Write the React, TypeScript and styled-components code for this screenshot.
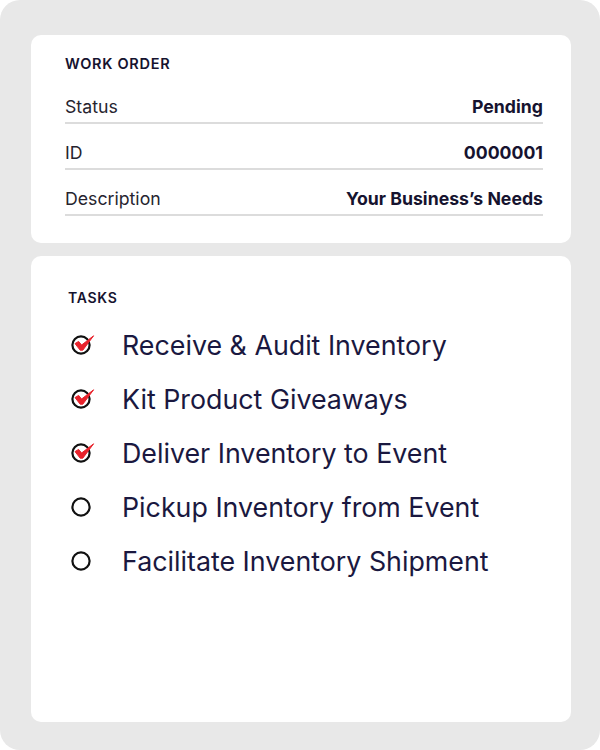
import React from 'react';
import styled, { createGlobalStyle } from 'styled-components';

const GlobalStyle = createGlobalStyle`
  html, body {
    margin: 0;
    padding: 0;
    background: #ffffff;
  }
  body {
    font-family: Inter, "Noto Sans", sans-serif;
    color: #16132f;
  }
`;

const Frame = styled.div`
  width: 600px;
  height: 750px;
  box-sizing: border-box;
  background: #e8e8e8;
  border-radius: 20px;
  padding: 35px 29px 28px 31px;
  display: flex;
  flex-direction: column;
  gap: 13px;
`;

const Card = styled.section<{ $grow?: boolean }>`
  background: #ffffff;
  border-radius: 10px;
  box-sizing: border-box;
  flex: ${p => (p.$grow ? '1' : 'none')};
`;

const OrderCard = styled(Card)`
  height: 208px;
  padding: 20px 28px 0 34px;
`;

const TasksCard = styled(Card)`
  padding: 33px 28px 0 37px;
`;

const Heading = styled.h2<{ $size?: number }>`
  margin: 0;
  font-size: ${p => p.$size ?? 14.5}px;
  font-weight: 600;
  letter-spacing: 0.7px;
  line-height: 17px;
  color: #16132f;
`;

const Rows = styled.div`
  margin-top: 6px;
  display: flex;
  flex-direction: column;
`;

const Row = styled.div`
  display: flex;
  justify-content: space-between;
  align-items: flex-end;
  height: 46px;
  padding-bottom: 4px;
  box-sizing: border-box;
  border-bottom: 2px solid #dcdcdc;
  font-size: 17.7px;
  line-height: 22px;
`;

const Label = styled.span`
  color: #26242f;
`;

const Value = styled.span`
  font-weight: 700;
  color: #16132f;
`;

const TaskList = styled.ul`
  list-style: none;
  margin: 12px 0 0;
  padding: 0;
  display: flex;
  flex-direction: column;
`;

const Task = styled.li`
  display: flex;
  align-items: center;
  height: 54px;
  gap: 29px;
  font-size: 26.8px;
  color: #1a1840;
`;

const IconBox = styled.span`
  width: 24px;
  height: 24px;
  flex: none;
  display: flex;
  margin-left: 1px;

  svg {
    overflow: visible;
  }
`;

const CheckIcon = ({ done }: { done: boolean }) => (
  <IconBox>
    <svg width="24" height="24" viewBox="0 0 24 24">
      <circle cx="12" cy="12" r="8.6" fill="none" stroke="#111" strokeWidth="2.2" />
      {done && (
        <path
          d="M6 10.6 L9.6 8.4 L12.6 12 L24.6 2.8 L13.8 17.2 L11.2 17.2 Z"
          fill="#e8232c"
          stroke="#e8232c"
          strokeWidth="1"
          strokeLinejoin="round"
        />
      )}
    </svg>
  </IconBox>
);

const details = [
  { label: 'Status', value: 'Pending' },
  { label: 'ID', value: '0000001' },
  { label: 'Description', value: 'Your Business\u2019s Needs' },
];

const tasks = [
  { name: 'Receive & Audit Inventory', done: true },
  { name: 'Kit Product Giveaways', done: true },
  { name: 'Deliver Inventory to Event', done: true },
  { name: 'Pickup Inventory from Event', done: false },
  { name: 'Facilitate Inventory Shipment', done: false },
];

export default function App() {
  return (
    <>
      <GlobalStyle />
      <Frame>
        <OrderCard>
          <Heading>WORK ORDER</Heading>
          <Rows>
            {details.map(d => (
              <Row key={d.label}>
                <Label>{d.label}</Label>
                <Value>{d.value}</Value>
              </Row>
            ))}
          </Rows>
        </OrderCard>
        <TasksCard $grow>
          <Heading $size={14}>TASKS</Heading>
          <TaskList>
            {tasks.map(t => (
              <Task key={t.name}>
                <CheckIcon done={t.done} />
                <span>{t.name}</span>
              </Task>
            ))}
          </TaskList>
        </TasksCard>
      </Frame>
    </>
  );
}
